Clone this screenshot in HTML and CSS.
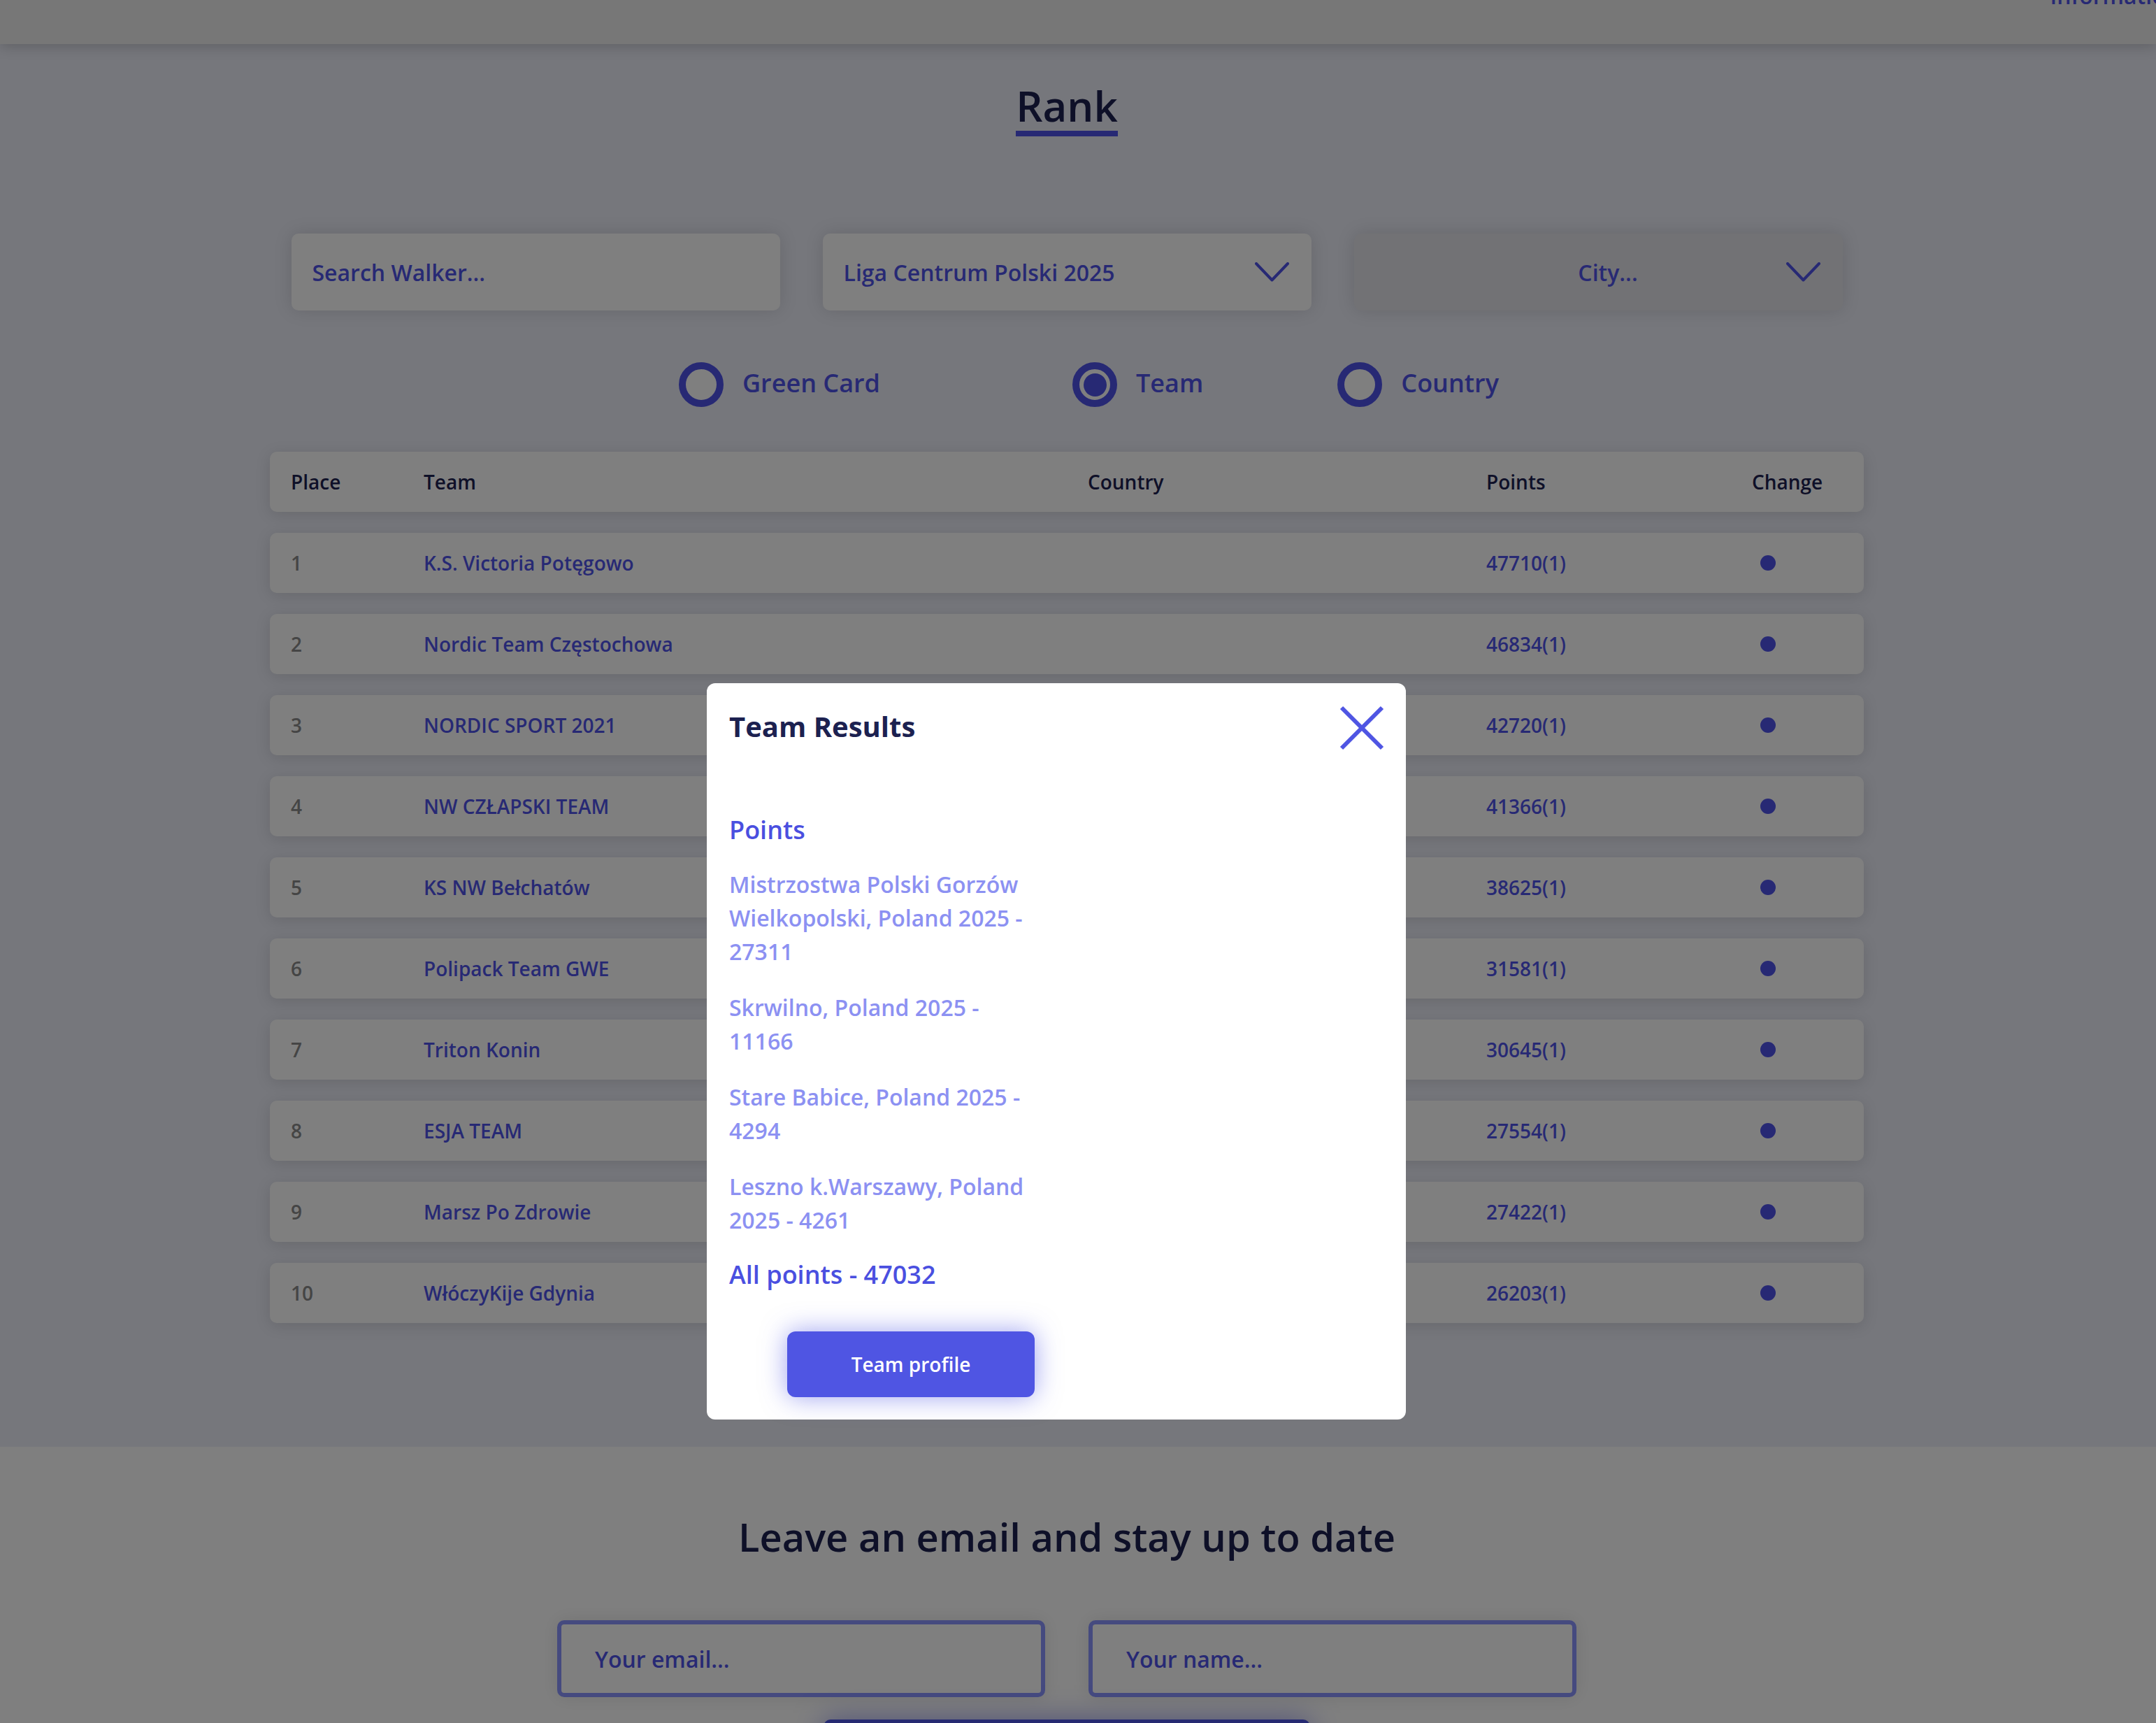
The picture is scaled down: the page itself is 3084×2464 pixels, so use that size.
FILE: index.html
```html
<!DOCTYPE html>
<html lang="en">
<head>
<meta charset="utf-8">
<title>Rank</title>
<link rel="stylesheet" href="styles.css">
</head>
<body>
<header class="topbar">
  <nav class="topnav">
    <a class="topnav-link">Information</a>
  </nav>
</header>

<main>
  <section class="rank">
    <div class="rank-inner">
      <div class="title-wrap">
        <h1 class="rank-title">Rank</h1>
      </div>

      <div class="filters">
        <div class="field">Search Walker...</div>
        <div class="field field-select">
          <span class="field-text">Liga Centrum Polski 2025</span>
          <svg class="chevron" width="49" height="28" viewBox="0 0 49 28"><polyline points="2,2 24.5,25.5 47,2" fill="none" stroke="currentColor" stroke-width="4" stroke-linecap="round" stroke-linejoin="round"/></svg>
        </div>
        <div class="field field-select field-city">
          <span class="field-text field-text-center">City...</span>
          <svg class="chevron" width="49" height="28" viewBox="0 0 49 28"><polyline points="2,2 24.5,25.5 47,2" fill="none" stroke="currentColor" stroke-width="4" stroke-linecap="round" stroke-linejoin="round"/></svg>
        </div>
      </div>

      <div class="radios">
        <label class="radio radio-green"><span class="radio-circle"></span><span class="radio-label">Green Card</span></label>
        <label class="radio radio-team"><span class="radio-circle is-checked"></span><span class="radio-label">Team</span></label>
        <label class="radio radio-country"><span class="radio-circle"></span><span class="radio-label">Country</span></label>
      </div>

      <div class="table">
        <div class="trow thead">
          <span>Place</span><span>Team</span><span>Country</span><span>Points</span><span>Change</span>
        </div>
        <div class="trow"><span class="place">1</span><span class="team">K.S. Victoria Potęgowo</span><span></span><span class="pts">47710(1)</span><span class="change"><i class="dot"></i></span></div>
        <div class="trow"><span class="place">2</span><span class="team">Nordic Team Częstochowa</span><span></span><span class="pts">46834(1)</span><span class="change"><i class="dot"></i></span></div>
        <div class="trow"><span class="place">3</span><span class="team">NORDIC SPORT 2021</span><span></span><span class="pts">42720(1)</span><span class="change"><i class="dot"></i></span></div>
        <div class="trow"><span class="place">4</span><span class="team">NW CZŁAPSKI TEAM</span><span></span><span class="pts">41366(1)</span><span class="change"><i class="dot"></i></span></div>
        <div class="trow"><span class="place">5</span><span class="team">KS NW Bełchatów</span><span></span><span class="pts">38625(1)</span><span class="change"><i class="dot"></i></span></div>
        <div class="trow"><span class="place">6</span><span class="team">Polipack Team GWE</span><span></span><span class="pts">31581(1)</span><span class="change"><i class="dot"></i></span></div>
        <div class="trow"><span class="place">7</span><span class="team">Triton Konin</span><span></span><span class="pts">30645(1)</span><span class="change"><i class="dot"></i></span></div>
        <div class="trow"><span class="place">8</span><span class="team">ESJA TEAM</span><span></span><span class="pts">27554(1)</span><span class="change"><i class="dot"></i></span></div>
        <div class="trow"><span class="place">9</span><span class="team">Marsz Po Zdrowie</span><span></span><span class="pts">27422(1)</span><span class="change"><i class="dot"></i></span></div>
        <div class="trow"><span class="place">10</span><span class="team">WłóczyKije Gdynia</span><span></span><span class="pts">26203(1)</span><span class="change"><i class="dot"></i></span></div>
      </div>
    </div>
  </section>

  <section class="newsletter">
    <div class="newsletter-inner">
      <h2 class="newsletter-title">Leave an email and stay up to date</h2>
      <div class="newsletter-fields">
        <div class="nl-input">Your email...</div>
        <div class="nl-input">Your name...</div>
      </div>
      <div class="nl-button"></div>
    </div>
  </section>
</main>

<div class="overlay"></div>

<div class="modal">
  <div class="modal-head">
    <h2 class="modal-title">Team Results</h2>
    <svg class="modal-close" width="64" height="64" viewBox="0 0 64 64"><line x1="3" y1="3" x2="61" y2="61" stroke="currentColor" stroke-width="6"/><line x1="61" y1="3" x2="3" y2="61" stroke="currentColor" stroke-width="6"/></svg>
  </div>
  <h3 class="modal-sub">Points</h3>
  <div class="result-list">
    <p class="result">Mistrzostwa Polski Gorzów Wielkopolski, Poland 2025 - 27311</p>
    <p class="result">Skrwilno, Poland 2025 - 11166</p>
    <p class="result">Stare Babice, Poland 2025 - 4294</p>
    <p class="result">Leszno k.Warszawy, Poland 2025 - 4261</p>
  </div>
  <p class="modal-total">All points - 47032</p>
  <div class="modal-btn">Team profile</div>
</div>
</body>
</html>
```

FILE: styles.css
```css
html, body {
  margin: 0;
  padding: 0;
  overflow: hidden;
  scrollbar-width: none;
}
body {
  font-family: "Open Sans", "Noto Sans", sans-serif;
  background: #eceef8;
  color: #1c2150;
}

/* top bar */
.topbar {
  height: 63px;
  background: #eeeeee;
  box-shadow: 0 4px 18px rgba(0, 0, 0, 0.18);
  display: flex;
  justify-content: flex-end;
  overflow: hidden;
  position: relative;
  z-index: 1;
}
.topnav {
  display: flex;
  margin-top: -28px;
  margin-right: -34px;
}
.topnav-link {
  font-size: 32px;
  font-weight: 600;
  line-height: normal;
  color: #4f53e8;
  white-space: nowrap;
}

/* rank section */
.rank {
  padding: 0 32px 177px 0;
  background: #eceef8;
}
.rank-inner {
  width: 2280px;
  margin: 0 auto;
}
.title-wrap {
  display: flex;
  justify-content: center;
  padding-top: 52px;
}
.rank-title {
  margin: 0;
  font-size: 60px;
  font-weight: 600;
  line-height: 72px;
  color: #1c2150;
  border-bottom: 8px solid #4f53e8;
}

.filters {
  width: 2219px;
  margin: 139px auto 0;
  display: grid;
  grid-template-columns: repeat(3, 699px);
  column-gap: 61px;
}
.field {
  height: 110px;
  box-sizing: border-box;
  background: #ffffff;
  border-radius: 10px;
  box-shadow: 0 0 26px rgba(0, 0, 0, 0.13);
  display: flex;
  align-items: center;
  padding: 0 32px 0 30px;
  font-size: 32px;
  font-weight: 600;
  color: #4f53e8;
}
.field-select {
  justify-content: space-between;
}
.field-city {
  background: #e4e4ea;
  position: relative;
}
.field-text-center {
  flex: 1;
  text-align: center;
  padding-left: 30px;
}
.field-city .chevron {
  position: absolute;
  right: 32px;
  top: 41px;
}
.chevron {
  color: #4f53e8;
  flex: none;
}

/* radios */
.radios {
  display: flex;
  align-items: center;
  height: 64px;
  margin-top: 74px;
}
.radio {
  display: flex;
  align-items: center;
  gap: 27px;
  font-size: 36px;
  font-weight: 600;
  color: #4f53e8;
}
.radio-label {
  padding-bottom: 6px;
}
.radio-green { margin-left: 585px; }
.radio-team { margin-left: 275px; }
.radio-country { margin-left: 192px; }
.radio-circle {
  width: 64px;
  height: 64px;
  box-sizing: border-box;
  border: 10px solid #4f53e8;
  border-radius: 50%;
  background: #ffffff;
  display: flex;
  align-items: center;
  justify-content: center;
}
.radio-circle.is-checked::after {
  content: "";
  width: 33px;
  height: 33px;
  border-radius: 50%;
  background: #4f53e8;
}

/* table */
.table {
  margin-top: 64px;
  display: flex;
  flex-direction: column;
  gap: 30px;
}
.trow {
  height: 86px;
  box-sizing: border-box;
  display: grid;
  grid-template-columns: 190px 950px 570px 380px 1fr;
  align-items: center;
  padding: 0 30px;
  background: #ffffff;
  border-radius: 10px;
  box-shadow: 0 4px 22px rgba(0, 0, 0, 0.12);
  font-size: 28px;
  font-weight: 600;
}
.thead {
  color: #1c2150;
}
.place { color: #8a8a8a; }
.team, .pts { color: #4f53e8; }
.change {
  display: flex;
  align-items: center;
}
.dot {
  display: block;
  width: 22px;
  height: 22px;
  margin-left: 12px;
  border-radius: 50%;
  background: #4f53e8;
}

/* newsletter */
.newsletter {
  background: #ffffff;
  padding: 90px 32px 0 0;
}
.newsletter-inner {
  display: flex;
  flex-direction: column;
  align-items: center;
}
.newsletter-title {
  margin: 0;
  font-size: 56px;
  font-weight: 600;
  line-height: normal;
  color: #1c2150;
}
.newsletter-fields {
  margin-top: 82px;
  display: grid;
  grid-template-columns: 698px 698px;
  column-gap: 62px;
}
.nl-input {
  height: 110px;
  box-sizing: border-box;
  border: 6px solid #8a94ff;
  border-radius: 10px;
  display: flex;
  align-items: center;
  padding-left: 48px;
  font-size: 32px;
  font-weight: 600;
  color: #4f53e8;
  box-shadow: 0 0 26px rgba(0, 0, 0, 0.1);
}
.nl-button {
  margin-top: 32px;
  width: 696px;
  height: 110px;
  border-radius: 10px;
  background: #4c54e4;
  box-shadow: 0 0 40px rgba(79, 85, 227, 0.55);
}

/* overlay + modal */
.overlay {
  position: fixed;
  inset: 0;
  background: rgba(0, 0, 0, 0.5);
  z-index: 10;
}
.modal {
  position: absolute;
  left: 1011px;
  top: 977px;
  width: 1000px;
  box-sizing: border-box;
  padding: 32px 31px 32px 32px;
  background: #ffffff;
  border-radius: 12px;
  z-index: 11;
}
.modal-head {
  height: 64px;
  display: flex;
  align-items: center;
  justify-content: space-between;
}
.modal-title {
  margin: 0;
  padding-bottom: 5px;
  font-size: 40px;
  font-weight: 700;
  color: #1c2150;
  line-height: normal;
}
.modal-close {
  color: #4f55e3;
  flex: none;
}
.modal-sub {
  margin: 87px 0 0;
  font-size: 36px;
  font-weight: 600;
  line-height: 54px;
  color: #4a4fe0;
}
.result-list {
  width: 436px;
  margin-top: 27px;
}
.result {
  margin: 0 0 32px;
  font-size: 32px;
  font-weight: 600;
  line-height: 48px;
  color: #8c91f2;
}
.result:last-child {
  margin-bottom: 0;
}
.modal-total {
  margin: 27px 0 0;
  font-size: 36px;
  font-weight: 600;
  line-height: 54px;
  color: #4a4fe0;
}
.modal-btn {
  margin: 54px 0 0 83px;
  width: 354px;
  height: 94px;
  border-radius: 12px;
  background: #4f55e3;
  box-shadow: 0 0 36px rgba(79, 85, 227, 0.55);
  color: #ffffff;
  font-size: 28px;
  font-weight: 600;
  display: flex;
  align-items: center;
  justify-content: center;
}
```
